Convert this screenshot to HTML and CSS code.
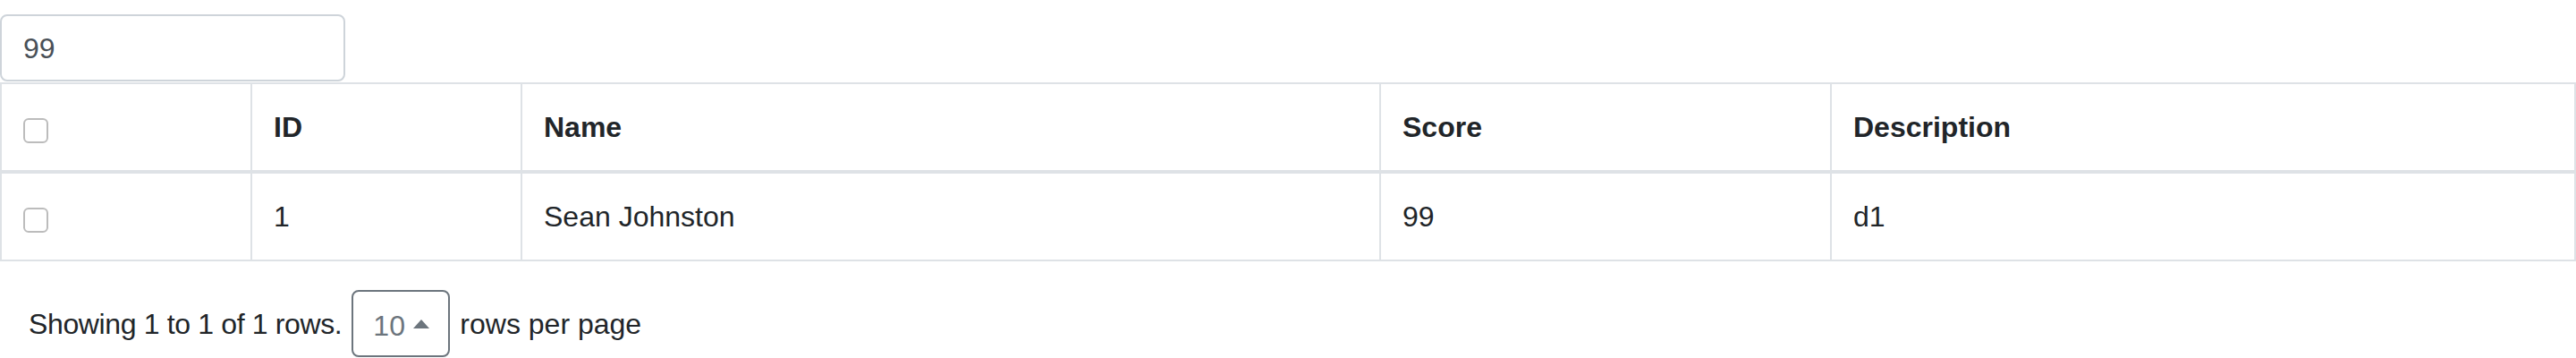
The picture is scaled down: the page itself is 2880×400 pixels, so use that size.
FILE: index.html
```html
<!DOCTYPE html>
<html lang="en">
<head>
<meta charset="utf-8">
<title>Table</title>
<link rel="stylesheet" href="styles.css">
</head>
<body>
<div class="toolbar">
  <input class="search" type="text" value="99">
</div>
<table class="grid">
  <colgroup>
    <col class="c-check">
    <col class="c-id">
    <col class="c-name">
    <col class="c-score">
    <col class="c-desc">
  </colgroup>
  <thead>
    <tr>
      <th><input class="check" type="checkbox"></th>
      <th>ID</th>
      <th>Name</th>
      <th>Score</th>
      <th>Description</th>
    </tr>
  </thead>
  <tbody>
    <tr>
      <td><input class="check" type="checkbox"></td>
      <td>1</td>
      <td>Sean Johnston</td>
      <td>99</td>
      <td>d1</td>
    </tr>
  </tbody>
</table>
<div class="pager">
  <span class="info info-count">Showing 1 to 1 of 1 rows.</span>
  <button class="page-size" type="button"><span class="num">10</span><span class="caret"></span></button>
  <span class="info">rows per page</span>
</div>
</body>
</html>
```
FILE: styles.css
```css
* { box-sizing: border-box; }
html, body {
  margin: 0;
  padding: 0;
  background: #fff;
}
body {
  font-family: "Liberation Sans", Arial, sans-serif;
  font-size: 32px;
  line-height: 1.5;
  color: #212529;
  width: 2880px;
  height: 400px;
  overflow: hidden;
}
.toolbar {
  padding-top: 16px;
  padding-bottom: 1px;
}
.search {
  display: block;
  width: 386px;
  height: 75px;
  margin: 0;
  padding: 2px 24px 0 24px;
  border: 2px solid #ced4da;
  border-radius: 8px;
  font-family: "Liberation Sans", Arial, sans-serif;
  font-size: 32px;
  color: #495057;
  background: #fff;
  outline: none;
}
.grid {
  width: 2880px;
  table-layout: fixed;
  border-collapse: separate;
  border-spacing: 0;
  border-left: 2px solid #dee2e6;
  border-top: 2px solid #dee2e6;
}
.c-check { width: 280px; }
.c-id { width: 302px; }
.c-name { width: 960px; }
.c-score { width: 504px; }
.c-desc { width: 832px; }
.grid th,
.grid td {
  padding: 24px;
  text-align: left;
  vertical-align: top;
  border-right: 2px solid #dee2e6;
  border-bottom: 2px solid #dee2e6;
  line-height: 48px;
}
.grid th {
  font-weight: bold;
  border-bottom-width: 4px;
}
.grid td {
  font-weight: normal;
}
.check {
  -webkit-appearance: none;
  appearance: none;
  display: block;
  width: 28px;
  height: 28px;
  margin: 14px 0 6px 0;
  border: 2px solid #bcbcbc;
  border-radius: 6px;
  background: #fff;
}
.pager {
  display: flex;
  align-items: center;
  gap: 11px;
  margin-top: 32px;
  padding-left: 32px;
}
.info {
  white-space: nowrap;
  line-height: 48px;
}
.info-count {
  letter-spacing: -0.36px;
}
.page-size {
  display: inline-flex;
  align-items: center;
  width: 110px;
  height: 75px;
  margin: 0;
  padding: 4px 20px 0 22px;
  border: 2px solid #6c757d;
  border-radius: 8px;
  background: #fff;
  color: #6c757d;
  font-family: "Liberation Sans", Arial, sans-serif;
  font-size: 32px;
  line-height: 48px;
}
.caret {
  display: inline-block;
  width: 0;
  height: 0;
  margin-left: 9px;
  margin-top: -4px;
  border-left: 9px solid transparent;
  border-right: 9px solid transparent;
  border-bottom: 10px solid #6c757d;
}
```
